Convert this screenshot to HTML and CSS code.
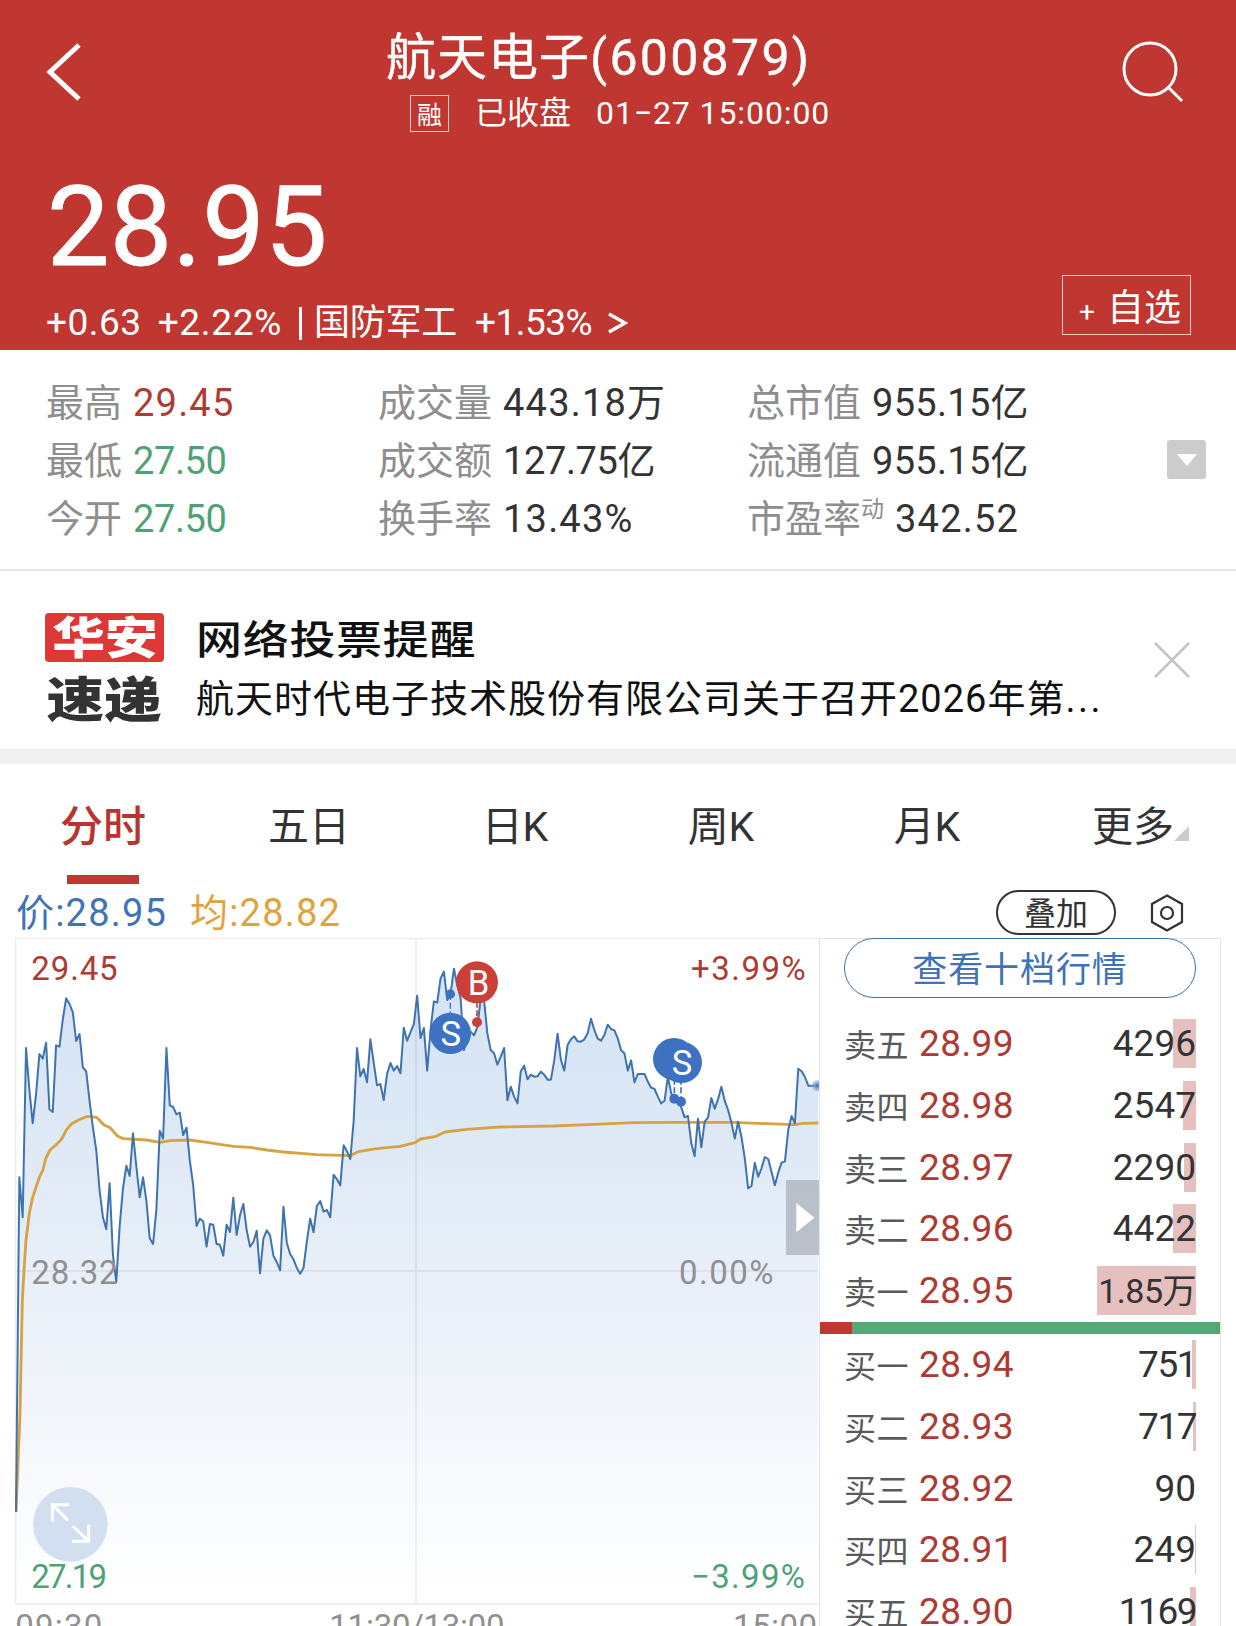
FILE: index.html
```
<!DOCTYPE html>
<html lang="zh-CN">
<head>
  <meta charset="UTF-8">
  <meta name="viewport" content="width=device-width, initial-scale=1.0">
  <title>航天电子(600879)</title>
  <link rel="stylesheet" href="styles.css">
</head>
<body>
  <div class="page">
    <header class="header">
      <div class="nav">
        <svg class="back" width="40" height="64" viewBox="0 0 40 64"><path d="M35 5 L6 32 L35 59"/></svg>
        <div class="heading">
          <h1>航天电子<span class="code">(600879)</span></h1>
          <div class="status">
            <span class="tag">融</span>
            <span class="closed">已收盘</span>
            <span class="time">01−27 15:00:00</span>
          </div>
        </div>
        <svg class="search" width="64" height="64" viewBox="0 0 64 64"><circle cx="29" cy="29" r="26"/><path d="M47 47 L61 61"/></svg>
      </div>
      <div class="quote">
        <div>
          <div class="price">28.95</div>
          <div class="change">
            <span class="diff">+0.63</span><span class="pct">+2.22%</span><span class="bar"></span><span class="sector">国防军工</span><span class="pct2">+1.53%</span>
            <svg width="20" height="22" viewBox="0 0 20 22"><path d="M1 2 L17 11 L1 20"/></svg>
          </div>
        </div>
        <button class="add"><span class="plus">+</span>自选</button>
      </div>
    </header>

    <section class="stats">
      <div class="col col1">
        <div><label>最高</label><b class="red">29.45</b></div>
        <div><label>最低</label><b class="green narrow">27.50</b></div>
        <div><label>今开</label><b class="green narrow">27.50</b></div>
      </div>
      <div class="col col2">
        <div><label>成交量</label><b>443.18万</b></div>
        <div><label>成交额</label><b class="narrow">127.75亿</b></div>
        <div><label>换手率</label><b>13.43%</b></div>
      </div>
      <div class="col col3">
        <div><label>总市值</label><b class="tight">955.15亿</b></div>
        <div><label>流通值</label><b class="tight">955.15亿</b></div>
        <div><label>市盈率<sup>动</sup></label><b>342.52</b></div>
      </div>
      <button class="expand"><svg width="20" height="12" viewBox="0 0 20 12"><path d="M0 0 H20 L10 12 Z"/></svg></button>
    </section>

    <section class="notice">
      <div class="logo">
        <div class="logo-top"><span>华安</span></div>
        <div class="logo-bottom"><span>速递</span></div>
      </div>
      <div class="notice-text">
        <div class="notice-title">网络投票提醒</div>
        <div class="notice-body">航天时代电子技术股份有限公司关于召开<span class="year">2026</span>年第<span class="dots">...</span></div>
      </div>
      <svg class="close" width="36" height="36" viewBox="0 0 36 36"><path d="M1 1 L35 35 M35 1 L1 35"/></svg>
    </section>

    <nav class="tabs">
      <a class="active">分时</a>
      <a>五日</a>
      <a>日K</a>
      <a>周K</a>
      <a>月K</a>
      <a class="more">更多<svg width="15" height="15" viewBox="0 0 15 15"><path d="M15 0 V15 H0 Z"/></svg></a>
    </nav>

    <div class="legend">
      <span class="blue">价:28.95</span>
      <span class="orange">均:28.82</span>
      <button class="overlay">叠加</button>
      <svg width="34" height="38" viewBox="0 0 34 38"><path d="M17 1.500 L32 10 V28 L17 36.500 L2 28 V10 Z"/><circle cx="17" cy="19" r="6"/></svg>
    </div>

    <main class="market">
      <!-- 3 units per pixel, one minute is 10 units wide -->
      <svg class="chart" width="805" height="688" viewBox="45 24 2415 2064">
        <defs>
          <linearGradient id="area" gradientUnits="userSpaceOnUse" x1="0" y1="100" x2="0" y2="2000">
            <stop offset="0" stop-color="#d3e2f4"/>
            <stop offset="0.5" stop-color="#e8eff8"/>
            <stop offset="0.8" stop-color="#f7f9fd"/>
            <stop offset="1" stop-color="#ffffff"/>
          </linearGradient>
          <radialGradient id="glow">
            <stop offset="0" stop-color="#3f73b5"/>
            <stop offset="1" stop-color="#8fb8ea" stop-opacity="0.5"/>
          </radialGradient>
        </defs>
        <path id="fill" fill="url(#area)"/>
        <path class="grid" d="M46.500 2021.500 V25.500 H2457 M1248 25 V2021 M46 1023 H2452 M46 2021.500 H2457"/>
        <path id="avg" class="avg" d="M48 1745 L60 1450 L67 1110 L72 1020 L78 930 L88 850 L98 802 L118 742 L128 722 L138 684 L150 660 L170 643 L185 627 L200 598 L215 581 L235 570 L262 559 L290 562 L312 585 L330 593 L352 618 L370 626 L440 630 L480 637 L510 632 L570 630 L620 637 L700 649 L750 652 L800 660 L850 666 L950 674 L1050 677 L1075 665 L1130 656 L1200 649 L1245 638 L1262 627 L1305 620 L1335 606 L1400 598 L1500 591 L1660 588 L1780 583 L1900 578 L2040 577 L2200 577 L2300 581 L2380 584 L2410 580 L2455 579"/>
        <path id="line" class="line"/>

        <g class="labels">
          <text class="red" x="94" y="150" textLength="259">29.45</text>
          <text class="red" x="2073" y="150" textLength="344">+3.99%</text>
          <text class="gray" x="94" y="1062" textLength="259">28.32</text>
          <text class="gray" x="2037" y="1062" textLength="283">0.00%</text>
          <text class="gray" x="46" y="2125" textLength="261">09:30</text>
          <text class="gray" x="988" y="2125" textLength="526">11:30/13:00</text>
          <text class="gray" x="2199" y="2125" textLength="252">15:00</text>
        </g>

        <g class="mark sell">
          <path d="M1351 192 V260"/><circle cx="1351" cy="192" r="14"/><circle cx="1351" cy="310" r="62"/>
          <text x="1352" y="348">S</text>
          <path class="white" d="M2023 446 V500 M2043 446 V500"/>
          <circle cx="2023" cy="506" r="15"/><circle cx="2043" cy="515" r="15"/>
          <circle cx="2022" cy="387" r="63"/><circle cx="2044" cy="397" r="62"/>
          <text x="2046" y="434">S</text>
        </g>
        <g class="mark buy">
          <path class="white" d="M1431 215 V265"/><circle cx="1431" cy="277" r="15"/><circle cx="1431" cy="157" r="63"/>
          <text x="1436" y="196">B</text>
        </g>
        <circle cx="2452" cy="467" r="17" fill="url(#glow)"/>

        <path class="side" d="M2358 750 H2457 V975 H2358 Z"/>
        <path fill="#fff" d="M2389 819 L2443 863 L2389 907 Z"/>

        <circle class="full" cx="211" cy="1783" r="112"/>
        <path class="arrows" d="M207 1724 H157 V1774 M157 1724 L204 1771 M216 1834 H266 V1784 M266 1834 L218 1788"/>
        <g class="labels">
          <text class="green" x="94" y="1975" textLength="227">27.19</text>
          <text class="green" x="2073" y="1975" textLength="342">−3.99%</text>
        </g>
      </svg>

      <aside class="book">
        <button class="depth">查看十档行情</button>
        <div class="rows sells">
          <div class="row"><span>卖五</span><b>28.99</b><i style="--w:23px">4296</i></div>
          <div class="row"><span>卖四</span><b>28.98</b><i style="--w:13px">2547</i></div>
          <div class="row"><span>卖三</span><b>28.97</b><i style="--w:12px">2290</i></div>
          <div class="row"><span>卖二</span><b>28.96</b><i style="--w:23px">4422</i></div>
          <div class="row"><span>卖一</span><b>28.95</b><i class="wan" style="--w:99px">1.85万</i></div>
        </div>
        <div class="ratio"></div>
        <div class="rows buys">
          <div class="row"><span>买一</span><b>28.94</b><i class="slim" style="--w:4px">751</i></div>
          <div class="row"><span>买二</span><b>28.93</b><i class="slim" style="--w:3px">717</i></div>
          <div class="row"><span>买三</span><b>28.92</b><i style="--w:0px">90</i></div>
          <div class="row"><span>买四</span><b>28.91</b><i style="--w:1px">249</i></div>
          <div class="row"><span>买五</span><b>28.90</b><i class="slim" style="--w:6px">1169</i></div>
        </div>
      </aside>
    </main>
  </div>

  <script>
    // one value per minute, the first is the open
    const points = [
      1745, 742, 862, 354, 480, 580, 492, 372, 386, 338, 538, 546, 346, 350, 268, 205, 222, 247, 333, 312,
      412, 424, 512, 592, 660, 780, 862, 898, 760, 975, 1056, 890, 775, 707, 738, 610, 710, 802, 742, 812,
      925, 942, 838, 602, 626, 354, 526, 531, 553, 548, 615, 593, 692, 765, 888, 866, 874, 950, 882, 884,
      942, 944, 977, 884, 906, 803, 915, 856, 822, 900, 950, 936, 902, 1030, 926, 901, 916, 977, 996, 1021,
      830, 938, 972, 988, 1014, 1031, 1014, 935, 866, 907, 828, 813, 845, 840, 862, 734, 748, 766, 646, 664,
      687, 575, 354, 439, 417, 457, 328, 398, 466, 462, 510, 432, 399, 422, 408, 430, 293, 332, 307, 282,
      197, 324, 294, 422, 300, 214, 218, 145, 125, 210, 190, 116, 165, 205, 360, 330, 305, 316, 292, 205,
      210, 310, 360, 370, 404, 380, 354, 511, 470, 500, 520, 424, 407, 448, 434, 440, 439, 425, 434, 449,
      449, 392, 311, 390, 422, 345, 328, 319, 334, 335, 328, 310, 266, 300, 326, 332, 315, 284, 297, 301,
      325, 361, 370, 422, 391, 457, 432, 432, 432, 455, 473, 477, 500, 520, 512, 440, 490, 505, 510, 532,
      562, 558, 640, 679, 566, 652, 575, 563, 504, 536, 508, 470, 512, 540, 577, 626, 575, 620, 685, 775,
      768, 698, 740, 715, 681, 687, 725, 766, 728, 698, 695, 600, 558, 580, 416, 424, 441, 467, 467, 467, 467
    ];
    const step = (2455 - 48) / 240;
    const d = points.map((y, i) => `${(48 + i * step).toFixed(1)} ${y}`).join(' L');
    document.getElementById('line').setAttribute('d', 'M' + d);
    document.getElementById('fill').setAttribute('d', 'M' + d + ' V2020 H48 Z');
  </script>
</body>
</html>
```
FILE: styles.css
```
* {
  box-sizing: border-box;
}
body {
  margin: 0;
  background: #fff;
  color: #333;
  font-family: Roboto, "Noto Sans CJK SC", sans-serif;
}
button {
  font-family: inherit;
  background: none;
  padding: 0;
}
b, i {
  font-weight: 400;
  font-style: normal;
}
.page {
  width: 1236px;
  height: 1626px;
  overflow: hidden;
}
.red { color: #ae3a34; fill: #ae3a34; }
.green { color: #4fa276; fill: #4fa276; }
.gray { fill: #909090; }
.blue { color: #3f73b5; }
.orange { color: #e0a33c; }

/* header */
.header {
  height: 350px;
  background: #c03630;
  color: #fff;
}
.nav {
  display: flex;
  height: 168px;
  padding: 28px 51px 0 44px;
}
.nav svg, .change svg {
  fill: none;
  stroke: #fff;
}
.back {
  margin-top: 12px;
  stroke-width: 5;
}
.search {
  margin-top: 12px;
  stroke-width: 3;
}
.heading {
  flex: 1;
  margin-left: 302px;
}
h1 {
  margin: 0;
  font-size: 50px;
  line-height: 61px;
  font-weight: 400;
  letter-spacing: 1px;
  -webkit-text-stroke: 0.400px;
}
.code {
  letter-spacing: 2.300px;
}
.status {
  display: flex;
  margin: 4px 0 0 24px;
  font-size: 32px;
  line-height: 40px;
}
.tag {
  width: 39px;
  height: 37px;
  margin-top: 2px;
  border: 1.500px solid #f3c9c6;
  font-size: 25px;
  line-height: 40px;
  text-align: center;
}
.closed {
  margin-left: 26px;
}
.time {
  margin-left: 25px;
  letter-spacing: 0.900px;
}
.quote {
  display: flex;
  justify-content: space-between;
  padding: 0 45px 0 46px;
}
.price {
  margin-left: 1px;
  font-size: 111px;
  line-height: 118px;
  letter-spacing: 0.400px;
  -webkit-text-stroke: 1px;
}
.change {
  display: flex;
  align-items: center;
  margin-top: 13px;
  font-size: 37px;
  line-height: 44px;
  letter-spacing: 0.500px;
}
.pct { margin-left: 16px; letter-spacing: 0.700px; }
.pct2 { margin-left: 18px; letter-spacing: -0.500px; }
.bar {
  width: 3px;
  height: 33px;
  margin: 0 12px 0 17px;
  background: #fff;
}
.sector {
  font-size: 36px;
  line-height: 48px;
  letter-spacing: -0.300px;
}
.change svg {
  margin-left: 16px;
  stroke-width: 3.500;
}
.add {
  width: 129px;
  height: 60px;
  margin-top: 107px;
  padding-left: 7px;
  border: 1px solid #f3c9c6;
  color: #fff;
  font-size: 37px;
  line-height: 65px;
  white-space: nowrap;
}
.plus {
  margin-right: 12px;
  font-size: 28px;
}

/* stats */
.stats {
  display: flex;
  height: 221px;
  padding: 24px 30px 0 46px;
  border-bottom: 2px solid #e5e5e5;
  font-size: 38px;
  line-height: 58px;
  white-space: nowrap;
}
.col label {
  display: inline-block;
  color: #8e8e8e;
  margin-right: 11px;
}
.col b { letter-spacing: 1.200px; }
.col .tight { letter-spacing: 0.300px; }
.col .narrow { letter-spacing: -0.400px; }
.col1 { width: 332px; }
.col2 { width: 369px; }
.col sup {
  font-size: 23px;
  line-height: 0;
  vertical-align: 15px;
}
.expand {
  width: 39px;
  height: 39px;
  margin: 66px 0 0 auto;
  border: 0;
  border-radius: 3px;
  background: #ccc;
}
.expand svg {
  display: block;
  margin: 0 auto;
  fill: #fff;
}

/* notice */
.notice {
  display: flex;
  height: 193px;
  padding: 42px 46px 0 45px;
  border-bottom: 15px solid #f0f0f0;
  color: #111;
}
.logo {
  width: 119px;
  font-weight: 900;
  text-align: center;
}
.logo-top {
  height: 49px;
  border-radius: 4px;
  background: #dd3835;
  color: #fff;
  font-size: 44px;
  line-height: 53px;
}
.logo-bottom {
  margin-top: 14px;
  color: #333;
  font-size: 48px;
  line-height: 50px;
}
.logo span {
  display: inline-block;
  transform: scaleX(1.2);
}
.notice-text {
  flex: 1;
  margin-left: 32px;
}
.notice-title {
  width: 280px;
  font-size: 40px;
  line-height: 56px;
  font-weight: 500;
  letter-spacing: 0.600px;
  white-space: nowrap;
  transform: scaleX(1.15);
  transform-origin: 0 0;
}
.notice-body {
  font-size: 38px;
  line-height: 60px;
  letter-spacing: 1px;
  white-space: nowrap;
}
.dots { letter-spacing: 2.500px; }
.close {
  margin-top: 29px;
  stroke: #c4c4c4;
  stroke-width: 2.500;
}

/* tabs */
.tabs {
  display: grid;
  grid-template-columns: repeat(6, 206px);
  height: 120px;
  font-size: 41px;
  line-height: 126px;
  text-align: center;
}
.tabs .active {
  position: relative;
  color: #b8352f;
  font-size: 43px;
  font-weight: 500;
}
.active::after {
  content: "";
  position: absolute;
  left: 67px;
  top: 111px;
  width: 72px;
  height: 9px;
  background: #c03630;
}
.more svg {
  fill: #ccc;
}
.more {
  padding-left: 15px;
}

.legend {
  display: flex;
  height: 54px;
  padding: 0 52px 0 16px;
  font-size: 38px;
  line-height: 58px;
}
.legend .blue, .legend .orange {
  width: 174px;
  letter-spacing: 1.200px;
}
.overlay {
  width: 120px;
  height: 45px;
  margin: 6px 34px 0 auto;
  border: 2px solid #333;
  border-radius: 23px;
  color: #333;
  font-size: 32px;
  line-height: 44px;
}
.legend svg {
  margin-top: 10px;
  fill: none;
  stroke: #333;
  stroke-width: 2.200;
}

/* chart and order book */
.market {
  display: flex;
  padding-left: 15px;
}
.chart {
  display: block;
}
.grid {
  fill: none;
  stroke: #5a6a7a;
  stroke-opacity: 0.13;
  stroke-width: 5;
}
.line, .avg {
  fill: none;
  stroke: #3f73b0;
  stroke-width: 6;
  stroke-linejoin: round;
}
.avg {
  stroke: #d6a242;
  stroke-width: 8.500;
}
.labels {
  font-size: 99px;
}
.mark text {
  fill: #fff;
  font-size: 104px;
  stroke-width: 0;
  text-anchor: middle;
}
.sell {
  fill: #3d72c2;
  stroke: #3d72c2;
}
.buy {
  fill: #cc3f39;
  stroke: #cc3f39;
}
.mark circle { stroke: none; }
.mark path {
  stroke-width: 4;
  stroke-dasharray: 18 8;
}
.mark .white { stroke-width: 5; }
.side {
  fill: #8e949c;
  fill-opacity: 0.5;
}
.full { fill: #d2dff0; }
.arrows {
  fill: none;
  stroke: #fff;
  stroke-width: 9;
}
.book {
  width: 402px;
  height: 688px;
  margin-left: -1px;
  border: solid #e3e3e3;
  border-width: 1px 1px 0;
}
.depth {
  display: block;
  width: 352px;
  height: 60px;
  margin: -1px 0 0 24px;
  border: 1.500px solid #4173a8;
  border-radius: 30px;
  color: #3f73b5;
  font-size: 35px;
  line-height: 63px;
  letter-spacing: 0.900px;
}
.rows {
  display: flex;
  flex-direction: column;
  gap: 12.750px;
  padding: 0 24px 0 24px;
}
.sells { padding-top: 21px; }
.buys { padding-top: 6px; }
.row {
  display: flex;
  height: 49px;
  font-size: 37px;
  line-height: 50px;
}
.row span {
  width: 75px;
  color: #5a5a5a;
  font-size: 32px;
  line-height: 54px;
  letter-spacing: 0.500px;
}
.row b {
  flex: 1;
  color: #ae3a34;
  letter-spacing: 0.400px;
}
.row i {
  min-width: 99px;
  text-align: right;
  background: linear-gradient(#e6bfbf, #e6bfbf) right / var(--w) 100% no-repeat;
}
.row .slim { letter-spacing: -1.500px; }
.row .wan {
  font-size: 34px;
  letter-spacing: -0.500px;
}
.ratio {
  height: 12px;
  margin-top: 7px;
  background: linear-gradient(90deg, #c03630 32px, #53a873 32px);
}
```
